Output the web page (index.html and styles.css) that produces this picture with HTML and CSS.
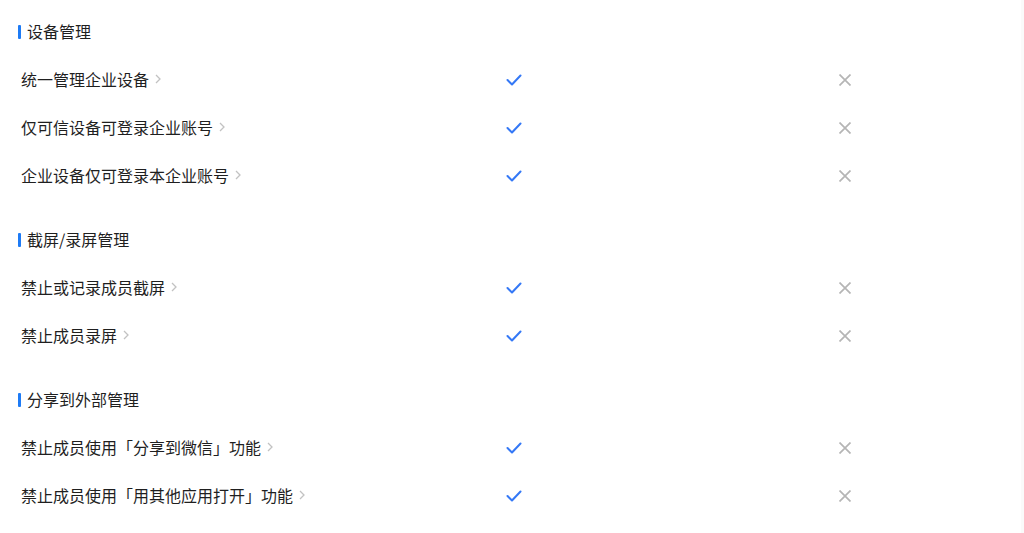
FILE: index.html
```html
<!DOCTYPE html>
<html lang="zh-CN">
<head>
    <meta charset="UTF-8">
    <meta name="viewport" content="width=device-width, initial-scale=1.0">
    <title>企业管理</title>
    <link rel="stylesheet" href="styles.css">
</head>
<body>

<div class="page">

    <div class="section">
        <h2 class="section-title">设备管理</h2>
        <div class="row">
            <div class="name">统一管理企业设备<span class="arrow"><svg width="6" height="10" viewBox="0 0 6 10"><polyline points="1,1 5,5 1,9" /></svg></span></div>
            <div class="yes"><svg width="16" height="12" viewBox="0 0 16 12"><polyline points="1.5,6 6,10.5 14.5,1.5" /></svg></div>
            <div class="no"><svg width="12" height="12" viewBox="0 0 12 12"><path d="M0.5 0.5L11.5 11.5M11.5 0.5L0.5 11.5" /></svg></div>
        </div>
        <div class="row">
            <div class="name">仅可信设备可登录企业账号<span class="arrow"><svg width="6" height="10" viewBox="0 0 6 10"><polyline points="1,1 5,5 1,9" /></svg></span></div>
            <div class="yes"><svg width="16" height="12" viewBox="0 0 16 12"><polyline points="1.5,6 6,10.5 14.5,1.5" /></svg></div>
            <div class="no"><svg width="12" height="12" viewBox="0 0 12 12"><path d="M0.5 0.5L11.5 11.5M11.5 0.5L0.5 11.5" /></svg></div>
        </div>
        <div class="row">
            <div class="name">企业设备仅可登录本企业账号<span class="arrow"><svg width="6" height="10" viewBox="0 0 6 10"><polyline points="1,1 5,5 1,9" /></svg></span></div>
            <div class="yes"><svg width="16" height="12" viewBox="0 0 16 12"><polyline points="1.5,6 6,10.5 14.5,1.5" /></svg></div>
            <div class="no"><svg width="12" height="12" viewBox="0 0 12 12"><path d="M0.5 0.5L11.5 11.5M11.5 0.5L0.5 11.5" /></svg></div>
        </div>
    </div>

    <div class="section">
        <h2 class="section-title">截屏/录屏管理</h2>
        <div class="row">
            <div class="name">禁止或记录成员截屏<span class="arrow"><svg width="6" height="10" viewBox="0 0 6 10"><polyline points="1,1 5,5 1,9" /></svg></span></div>
            <div class="yes"><svg width="16" height="12" viewBox="0 0 16 12"><polyline points="1.5,6 6,10.5 14.5,1.5" /></svg></div>
            <div class="no"><svg width="12" height="12" viewBox="0 0 12 12"><path d="M0.5 0.5L11.5 11.5M11.5 0.5L0.5 11.5" /></svg></div>
        </div>
        <div class="row">
            <div class="name">禁止成员录屏<span class="arrow"><svg width="6" height="10" viewBox="0 0 6 10"><polyline points="1,1 5,5 1,9" /></svg></span></div>
            <div class="yes"><svg width="16" height="12" viewBox="0 0 16 12"><polyline points="1.5,6 6,10.5 14.5,1.5" /></svg></div>
            <div class="no"><svg width="12" height="12" viewBox="0 0 12 12"><path d="M0.5 0.5L11.5 11.5M11.5 0.5L0.5 11.5" /></svg></div>
        </div>
    </div>

    <div class="section">
        <h2 class="section-title">分享到外部管理</h2>
        <div class="row">
            <div class="name">禁止成员使用「分享到微信」功能<span class="arrow"><svg width="6" height="10" viewBox="0 0 6 10"><polyline points="1,1 5,5 1,9" /></svg></span></div>
            <div class="yes"><svg width="16" height="12" viewBox="0 0 16 12"><polyline points="1.5,6 6,10.5 14.5,1.5" /></svg></div>
            <div class="no"><svg width="12" height="12" viewBox="0 0 12 12"><path d="M0.5 0.5L11.5 11.5M11.5 0.5L0.5 11.5" /></svg></div>
        </div>
        <div class="row">
            <div class="name">禁止成员使用「用其他应用打开」功能<span class="arrow"><svg width="6" height="10" viewBox="0 0 6 10"><polyline points="1,1 5,5 1,9" /></svg></span></div>
            <div class="yes"><svg width="16" height="12" viewBox="0 0 16 12"><polyline points="1.5,6 6,10.5 14.5,1.5" /></svg></div>
            <div class="no"><svg width="12" height="12" viewBox="0 0 12 12"><path d="M0.5 0.5L11.5 11.5M11.5 0.5L0.5 11.5" /></svg></div>
        </div>
    </div>

</div>

</body>
</html>
```

FILE: styles.css
```css
body {
    margin: 0;
    background-color: #fff;
    color: #1f1f1f;
    font-family: "Noto Sans CJK SC", "Noto Sans", sans-serif;
    font-size: 16px;
}

.page {
    padding: 7px 0 0 21px;
    border-right: 3px solid #fafafa;
    min-height: 526px;
}

.section {
    margin-bottom: 16px;
}

.section-title {
    display: flex;
    align-items: center;
    height: 48px;
    margin: 0 0 0 -3px;
    font-size: 16px;
    font-weight: normal;
}

.section-title::before {
    content: "";
    width: 3px;
    height: 14px;
    margin-right: 6px;
    margin-top: 2px;
    background-color: #1e7bf5;
    border-radius: 1px;
}

.row {
    display: flex;
    align-items: center;
    height: 48px;
}

.name {
    width: 441px;
    display: flex;
    align-items: center;
}

.arrow {
    display: flex;
    margin-left: 6px;
}

.arrow polyline {
    fill: none;
    stroke: #c2c2c2;
    stroke-width: 1.3;
}

.yes, .no {
    width: 100px;
    display: flex;
    justify-content: center;
    padding-top: 2px;
}

.yes {
    padding-left: 2px;
}

.no {
    margin-left: 229px;
    padding-left: 2px;
}

.yes polyline {
    fill: none;
    stroke: #3478f6;
    stroke-width: 2;
    stroke-linecap: round;
    stroke-linejoin: round;
}

.no path {
    fill: none;
    stroke: #b5b5b5;
    stroke-width: 1.7;
}
```
